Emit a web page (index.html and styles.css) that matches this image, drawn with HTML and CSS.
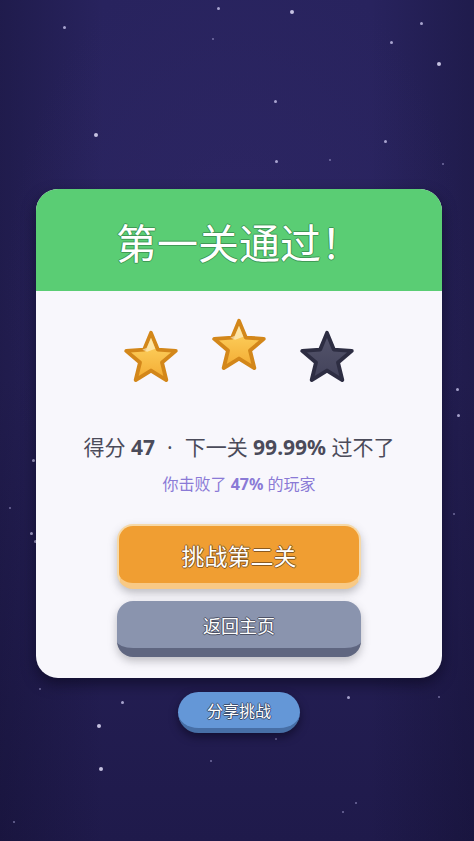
FILE: index.html
```html
<!DOCTYPE html>
<html lang="zh-CN">
<head>
    <meta charset="UTF-8">
    <meta name="viewport" content="width=device-width, initial-scale=1.0">
    <title>第一关通过</title>
    <link rel="stylesheet" href="styles.css">
</head>
<body>
    <div class="sky">
        <span class="dot" style="left:217px;top:7px"></span>
        <span class="dot big" style="left:290px;top:10px"></span>
        <span class="dot" style="left:63px;top:26px"></span>
        <span class="dot" style="left:420px;top:22px"></span>
        <span class="dot" style="left:390px;top:41px"></span>
        <span class="dot big" style="left:437px;top:62px"></span>
        <span class="dot" style="left:274px;top:100px"></span>
        <span class="dot big" style="left:94px;top:133px"></span>
        <span class="dot" style="left:384px;top:140px"></span>
        <span class="dot" style="left:275px;top:160px"></span>
        <span class="dot small" style="left:329px;top:159px"></span>
        <span class="dot small" style="left:212px;top:38px"></span>
        <span class="dot small" style="left:442px;top:163px"></span>
        <span class="dot" style="left:456px;top:388px"></span>
        <span class="dot" style="left:457px;top:414px"></span>
        <span class="dot" style="left:32px;top:459px"></span>
        <span class="dot small" style="left:9px;top:507px"></span>
        <span class="dot" style="left:30px;top:532px"></span>
        <span class="dot" style="left:34px;top:540px"></span>
        <span class="dot small" style="left:453px;top:513px"></span>
        <span class="dot" style="left:347px;top:696px"></span>
        <span class="dot" style="left:121px;top:701px"></span>
        <span class="dot big" style="left:97px;top:724px"></span>
        <span class="dot big" style="left:99px;top:767px"></span>
        <span class="dot small" style="left:210px;top:760px"></span>
        <span class="dot small" style="left:355px;top:802px"></span>
        <span class="dot small" style="left:342px;top:811px"></span>
        <span class="dot small" style="left:13px;top:821px"></span>
        <span class="dot small" style="left:39px;top:688px"></span>
        <span class="dot small" style="left:275px;top:738px"></span>
        <span class="dot small" style="left:438px;top:696px"></span>
    </div>

    <div class="page">
        <div class="card">
            <div class="card-head">
                <h1>第一关通过！</h1>
            </div>
            <div class="card-body">
                <div class="stars">
                    <svg class="star side" viewBox="0 0 60 58">
                        <defs>
                            <linearGradient id="gold" x1="0" y1="0" x2="0" y2="1">
                                <stop offset="0" stop-color="#ffd968"/>
                                <stop offset="1" stop-color="#f3ab32"/>
                            </linearGradient>
                            <linearGradient id="dark" x1="0" y1="0" x2="0" y2="1">
                                <stop offset="0" stop-color="#55556c"/>
                                <stop offset="1" stop-color="#42425a"/>
                            </linearGradient>
                        </defs>
                        <polygon class="gold" points="30,4 37.05,21.29 55.68,22.66 41.41,34.71 45.87,52.84 30,43 14.13,52.84 18.59,34.71 4.32,22.66 22.95,21.29"/>
                        <polygon class="shine" points="30,9 34.5,20.5 26,23.5 21,21.5 25.5,19.5"/>
                    </svg>
                    <svg class="star" viewBox="0 0 60 58">
                        <polygon class="gold" points="30,4 37.05,21.29 55.68,22.66 41.41,34.71 45.87,52.84 30,43 14.13,52.84 18.59,34.71 4.32,22.66 22.95,21.29"/>
                        <polygon class="shine" points="30,9 34.5,20.5 26,23.5 21,21.5 25.5,19.5"/>
                    </svg>
                    <svg class="star side" viewBox="0 0 60 58">
                        <polygon class="dim" points="30,4 37.05,21.29 55.68,22.66 41.41,34.71 45.87,52.84 30,43 14.13,52.84 18.59,34.71 4.32,22.66 22.95,21.29"/>
                    </svg>
                </div>

                <p class="score">得分 <b>47</b><span class="sep">·</span>下一关 <b>99.99%</b> 过不了</p>
                <p class="beat">你击败了 <b>47%</b> 的玩家</p>

                <button class="btn btn-next">挑战第二关</button>
                <button class="btn btn-home">返回主页</button>
            </div>
        </div>

        <button class="btn-share">分享挑战</button>
    </div>
</body>
</html>
```

FILE: styles.css
```css
* {
    box-sizing: border-box;
    margin: 0;
    padding: 0;
    font-family: "Noto Sans", "Noto Sans CJK SC", sans-serif;
}
body {
    width: 474px;
    height: 841px;
    overflow: hidden;
    position: relative;
    background:
        radial-gradient(ellipse 70% 60% at 50% 35%, rgba(48, 40, 104, 0.55), rgba(0, 0, 0, 0) 70%),
        linear-gradient(90deg, rgba(12, 10, 36, 0.3), rgba(0, 0, 0, 0) 22%, rgba(0, 0, 0, 0) 78%, rgba(12, 10, 36, 0.3)),
        linear-gradient(180deg, #28235e 0%, #29235d 45%, #1f1a4b 100%);
}
.sky {
    position: absolute;
    inset: 0;
}
.dot {
    position: absolute;
    width: 3px;
    height: 3px;
    border-radius: 50%;
    background: rgba(200, 196, 235, 0.8);
}
.dot.big {
    width: 4px;
    height: 4px;
    background: rgba(215, 212, 240, 0.9);
}
.dot.small {
    width: 2px;
    height: 2px;
    background: rgba(170, 165, 215, 0.6);
}
.page {
    position: relative;
    display: flex;
    flex-direction: column;
    align-items: center;
    padding: 189px 0 0 4px;
}
.card {
    width: 406px;
    border-radius: 22px;
    overflow: hidden;
    background: #f8f7fc;
    box-shadow: 0 6px 14px rgba(8, 6, 24, 0.55);
}
.card-head {
    height: 102px;
    background: #5acd74;
    display: flex;
    align-items: center;
    justify-content: center;
}
.card-head h1 {
    color: #fff;
    font-family: "Noto Sans CJK SC", sans-serif;
    font-size: 41px;
    font-weight: 400;
    line-height: 1;
    margin-top: 2px;
    text-shadow: 1px 0 0 #3f9a55, -1px 0 0 #3f9a55, 0 1px 0 #3f9a55, 0 -1px 0 #3f9a55;
}
.card-body {
    display: flex;
    flex-direction: column;
    align-items: center;
    padding: 26px 0 21px;
}
.stars {
    display: flex;
    gap: 30px;
    height: 68px;
}
.star {
    width: 58px;
    height: 56px;
}
.star.side {
    margin-top: 12px;
}
.gold {
    fill: url(#gold);
    stroke: #d3871a;
    stroke-width: 4;
    stroke-linejoin: round;
}
.dim {
    fill: url(#dark);
    stroke: #2d2d42;
    stroke-width: 4;
    stroke-linejoin: round;
}
.shine {
    fill: rgba(255, 245, 215, 0.6);
}
.score {
    margin-top: 48px;
    font-size: 21px;
    line-height: 29px;
    color: #4b4b5a;
}
.score b {
    font-weight: 700;
}
.sep {
    margin: 0 12px;
}
.beat {
    margin-top: 11px;
    font-size: 16px;
    line-height: 22px;
    color: #8a7ad6;
}
.beat b {
    font-weight: 700;
}
.btn {
    width: 244px;
    border: none;
    color: #fff;
    font-family: "Noto Sans CJK SC", sans-serif;
    cursor: pointer;
}
.btn-next {
    margin-top: 29px;
    height: 65px;
    border-radius: 16px;
    background: #f09e32;
    border: 2px solid #f6d9a8;
    border-bottom: 6px solid #f8c985;
    font-size: 23px;
    text-shadow: 1px 0 0 #8a5a20, -1px 0 0 #8a5a20, 0 1px 0 #8a5a20, 0 -1px 0 #8a5a20;
    box-shadow: 0 4px 8px rgba(80, 80, 90, 0.35);
}
.btn-home {
    margin-top: 12px;
    height: 56px;
    border-radius: 16px;
    background: #8a94ae;
    border-bottom: 9px solid #5f6680;
    font-size: 18px;
    text-shadow: 1px 0 0 #4d5266, -1px 0 0 #4d5266, 0 1px 0 #4d5266, 0 -1px 0 #4d5266;
    box-shadow: 0 4px 8px rgba(80, 80, 90, 0.35);
}
.btn-share {
    margin-top: 14px;
    width: 122px;
    height: 41px;
    border: none;
    border-radius: 21px;
    background: #6497d7;
    border-bottom: 5px solid #476fa6;
    color: #fff;
    font-family: "Noto Sans CJK SC", sans-serif;
    font-size: 16px;
    text-shadow: 1px 0 0 #3d4f70, -1px 0 0 #3d4f70, 0 1px 0 #3d4f70, 0 -1px 0 #3d4f70;
    box-shadow: 0 4px 8px rgba(6, 4, 20, 0.5);
}
```
